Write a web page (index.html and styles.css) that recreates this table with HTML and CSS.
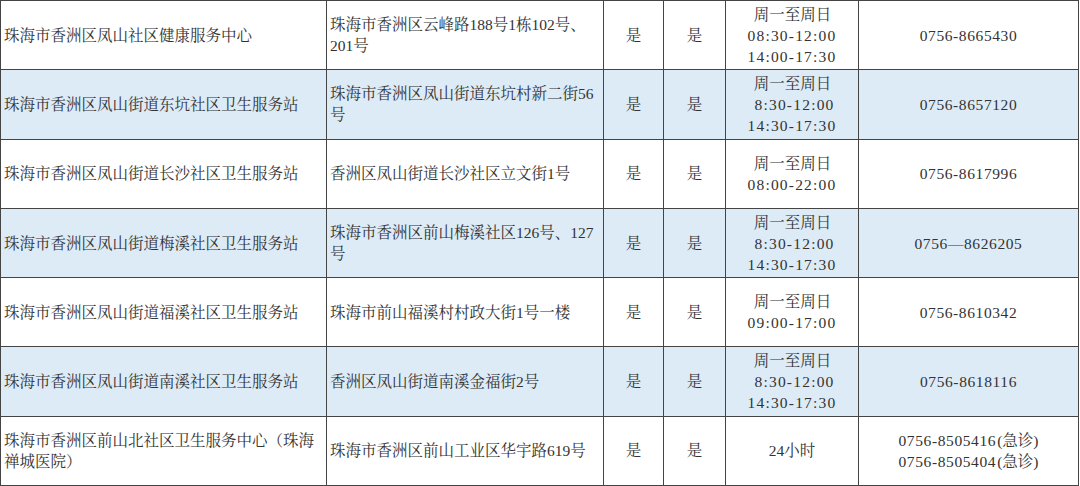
FILE: index.html
```html
<!DOCTYPE html>
<html lang="zh-CN">
<head>
<meta charset="utf-8">
<title>社区卫生服务机构</title>
<link rel="stylesheet" href="styles.css">
</head>
<body>
<table class="grid">
  <colgroup>
    <col class="c-name"><col class="c-addr"><col class="c-yes"><col class="c-yes2"><col class="c-time"><col class="c-tel">
  </colgroup>
  <tbody>
    <tr>
      <td class="left">珠海市香洲区凤山社区健康服务中心</td>
      <td class="left">珠海市香洲区云峰路188号1栋102号、<br>201号</td>
      <td>是</td><td>是</td>
      <td class="time"><span class="cn">周一至周日</span><br>08:30-12:00<br>14:00-17:30</td>
      <td class="tel">0756-8665430</td>
    </tr>
    <tr class="alt">
      <td class="left">珠海市香洲区凤山街道东坑社区卫生服务站</td>
      <td class="left">珠海市香洲区凤山街道东坑村新二街56<br>号</td>
      <td>是</td><td>是</td>
      <td class="time"><span class="cn">周一至周日</span><br>&nbsp;8:30-12:00<br>14:30-17:30</td>
      <td class="tel">0756-8657120</td>
    </tr>
    <tr>
      <td class="left">珠海市香洲区凤山街道长沙社区卫生服务站</td>
      <td class="left">香洲区凤山街道长沙社区立文街1号</td>
      <td>是</td><td>是</td>
      <td class="time"><span class="cn">周一至周日</span><br>08:00-22:00</td>
      <td class="tel">0756-8617996</td>
    </tr>
    <tr class="alt">
      <td class="left">珠海市香洲区凤山街道梅溪社区卫生服务站</td>
      <td class="left">珠海市香洲区前山梅溪社区126号、127<br>号</td>
      <td>是</td><td>是</td>
      <td class="time"><span class="cn">周一至周日</span><br>&nbsp;8:30-12:00<br>14:30-17:30</td>
      <td class="tel">0756—8626205</td>
    </tr>
    <tr>
      <td class="left">珠海市香洲区凤山街道福溪社区卫生服务站</td>
      <td class="left">珠海市前山福溪村村政大街1号一楼</td>
      <td>是</td><td>是</td>
      <td class="time"><span class="cn">周一至周日</span><br>09:00-17:00</td>
      <td class="tel">0756-8610342</td>
    </tr>
    <tr class="alt">
      <td class="left">珠海市香洲区凤山街道南溪社区卫生服务站</td>
      <td class="left">香洲区凤山街道南溪金福街2号</td>
      <td>是</td><td>是</td>
      <td class="time"><span class="cn">周一至周日</span><br>&nbsp;8:30-12:00<br>14:30-17:30</td>
      <td class="tel">0756-8618116</td>
    </tr>
    <tr>
      <td class="left">珠海市香洲区前山北社区卫生服务中心（珠海<br>禅城医院）</td>
      <td class="left">珠海市香洲区前山工业区华宇路619号</td>
      <td>是</td><td>是</td>
      <td>24小时</td>
      <td class="tel">0756-8505416<span class="cn">(急诊)</span><br>0756-8505404<span class="cn">(急诊)</span></td>
    </tr>
  </tbody>
</table>
</body>
</html>
```

FILE: styles.css
```css
html, body {
  margin: 0;
  padding: 0;
  background: #ffffff;
}

.grid {
  border-collapse: collapse;
  table-layout: fixed;
  width: 1079px;
  font-family: "Liberation Serif", "Noto Serif CJK SC", "Noto Sans CJK SC", serif;
  font-size: 15.5px;
  line-height: 21px;
  color: #333333;
}

.c-name { width: 326px; }
.c-addr { width: 277px; }
.c-yes { width: 60px; }
.c-yes2 { width: 62px; }
.c-time { width: 133px; }
.c-tel { width: 220px; }

.grid td {
  height: 68.3px;
  padding: 0 2px;
  border: 1px solid #444444;
  text-align: center;
  vertical-align: middle;
  white-space: nowrap;
  overflow: hidden;
}

.grid td.left {
  text-align: left;
  padding-left: 3px;
}

.grid td.time {
  letter-spacing: 1.2px;
}

.grid td.tel {
  letter-spacing: 0.6px;
}

.grid td .cn {
  letter-spacing: 0;
  margin-left: 1px;
}

.grid tr.alt td {
  background: #ddebf7;
}
```
